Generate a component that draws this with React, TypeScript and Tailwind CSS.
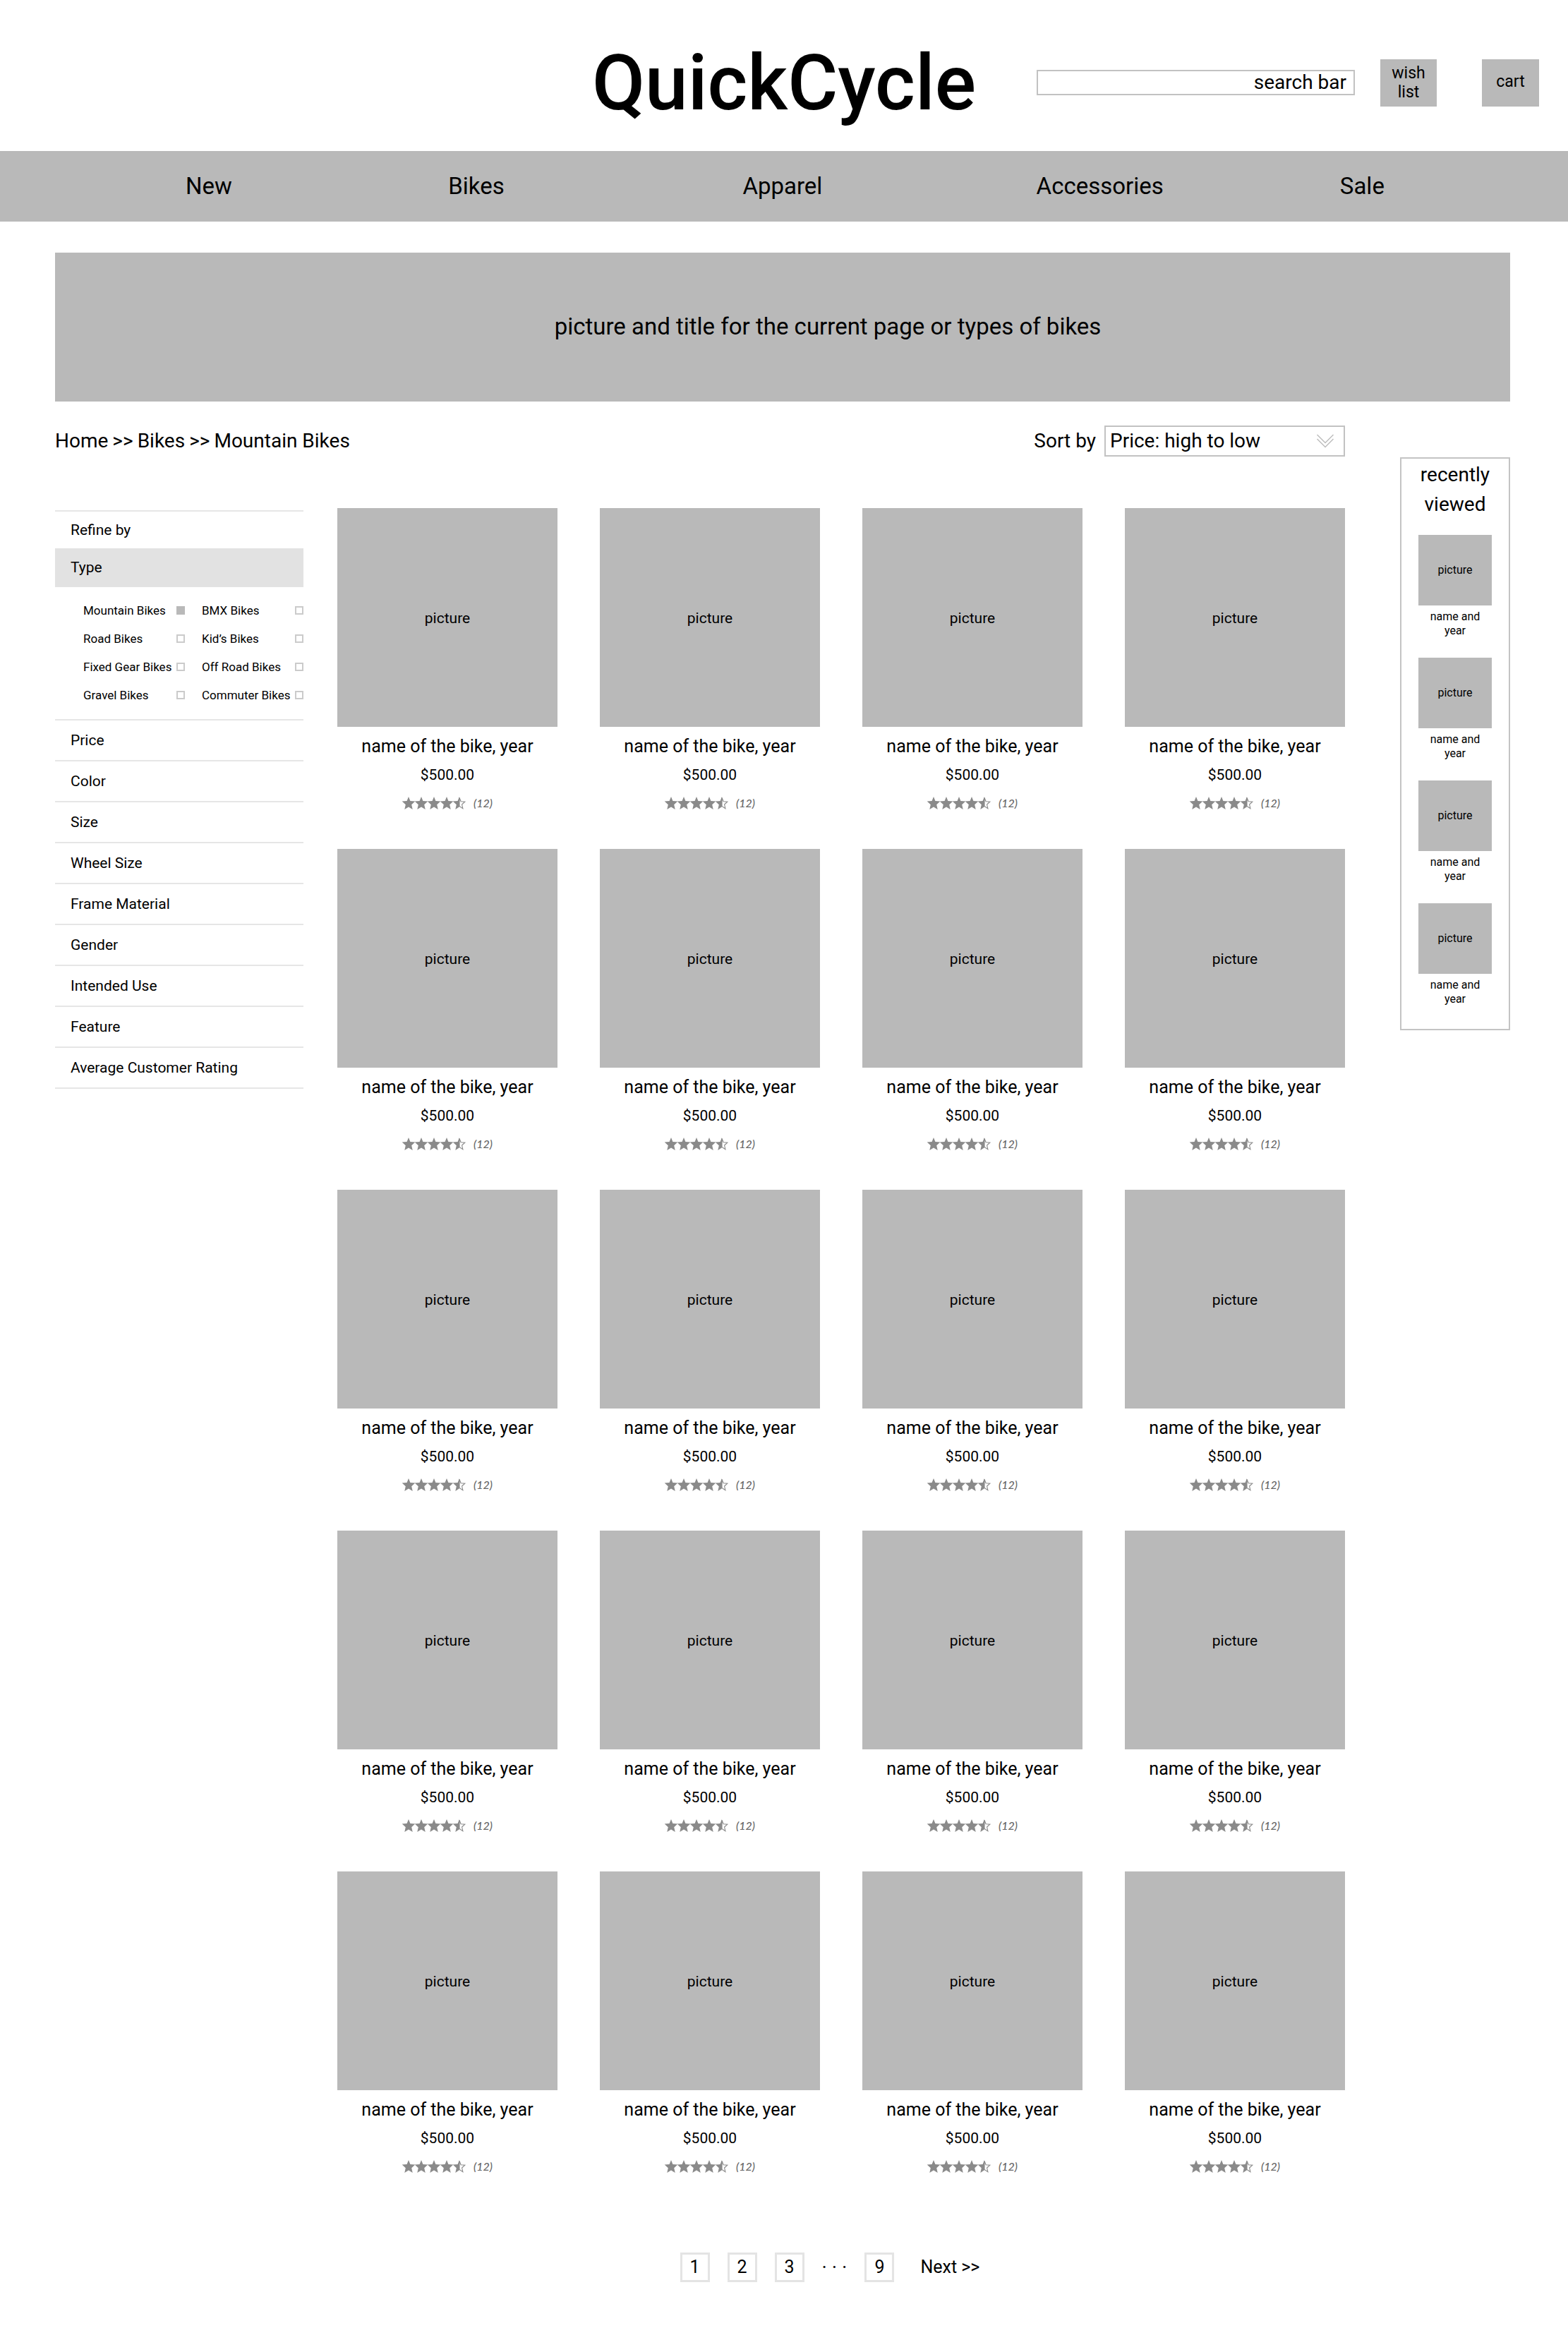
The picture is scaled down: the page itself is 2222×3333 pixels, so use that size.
import React from "react";

const navItems = ["New", "Bikes", "Apparel", "Accessories", "Sale"];

const bikeTypes = [
  { label: "Mountain Bikes", checked: true },
  { label: "BMX Bikes", checked: false },
  { label: "Road Bikes", checked: false },
  { label: "Kid’s Bikes", checked: false },
  { label: "Fixed Gear Bikes", checked: false },
  { label: "Off Road Bikes", checked: false },
  { label: "Gravel Bikes", checked: false },
  { label: "Commuter Bikes", checked: false },
];

const filters = [
  "Price",
  "Color",
  "Size",
  "Wheel Size",
  "Frame Material",
  "Gender",
  "Intended Use",
  "Feature",
  "Average Customer Rating",
];

const products = Array.from({ length: 20 }, (_, i) => ({
  id: i,
  name: "name of the bike, year",
  price: "$500.00",
  reviews: 12,
}));

const recentlyViewed = [0, 1, 2, 3];

function Star({ half = false }: { half?: boolean }) {
  return (
    <svg viewBox="0 0 18 18" className="h-[18px] w-[18px] overflow-visible" aria-hidden="true">
      {half ? (
        <>
          <path d="M9 0 L9 14.2 L3.3 18 L4.8 11.3 L-0.3 6.6 L6.6 6.1 Z" fill="#8a8a8a" />
          <path
            d="M9 1.2 L11.1 6.7 L16.8 7.1 L12.6 11 L13.9 16.8 L9 13.5 Z"
            fill="none"
            stroke="#8a8a8a"
            strokeWidth="1.1"
          />
        </>
      ) : (
        <path
          d="M9 0 L11.4 6.1 L18.3 6.6 L13.2 11.3 L14.7 18 L9 14.6 L3.3 18 L4.8 11.3 L-0.3 6.6 L6.6 6.1 Z"
          fill="#8a8a8a"
        />
      )}
    </svg>
  );
}

function Header() {
  return (
    <header className="grid grid-cols-[1fr_auto_1fr] items-center pt-[52px] pb-8">
      <h1 className="col-start-2 pt-0.5 text-[109px] leading-[128px] font-medium">QuickCycle</h1>
      <div className="flex items-center pr-[41px] pl-[86px]">
        <input
          type="text"
          aria-label="search bar"
          placeholder="search bar"
          className="h-9 min-w-0 flex-1 border-2 border-[#c2c2c2] bg-white px-2.5 pb-0.5 text-right text-[28px] leading-8 text-black outline-none placeholder:text-black placeholder:opacity-100"
        />
        <button className="ml-9 h-[67px] w-[80px] bg-[#b9b9b9] px-2 text-[23px] leading-[27px]">
          wish list
        </button>
        <button className="ml-16 h-[67px] w-[81px] bg-[#b9b9b9] pb-1 text-[23px] leading-[27px]">
          cart
        </button>
      </div>
    </header>
  );
}

function Nav() {
  return (
    <nav className="grid grid-cols-[372fr_417fr_416fr_430fr_323fr] bg-[#b9b9b9] pl-[263px]">
      {navItems.map((item) => (
        <a key={item} href="#" className="text-[33px] leading-[100px]">
          {item}
        </a>
      ))}
    </nav>
  );
}

function Toolbar() {
  return (
    <div className="flex items-center justify-between text-[28px]">
      <nav aria-label="Breadcrumb" className="flex gap-1.5">
        <a href="#">Home</a>
        <span>&gt;&gt;</span>
        <a href="#">Bikes</a>
        <span>&gt;&gt;</span>
        <a href="#">Mountain Bikes</a>
      </nav>
      <div className="flex items-center gap-3">
        <label htmlFor="sort">Sort by</label>
        <div className="relative">
          <select
            id="sort"
            className="h-11 w-[341px] appearance-none border-2 border-[#c2c2c2] bg-white pl-[6px] leading-10"
          >
            <option>Price: high to low</option>
            <option>Price: low to high</option>
          </select>
          <svg
            viewBox="0 0 24 20"
            className="pointer-events-none absolute top-3 right-4 h-5 w-6"
            fill="none"
            stroke="#bdbdbd"
            strokeWidth="1.5"
            aria-hidden="true"
          >
            <path d="M0.5 1 L12 12.5 L23.5 1" />
            <path d="M0.5 7 L12 18.5 L23.5 7" />
          </svg>
        </div>
      </div>
    </div>
  );
}

function Sidebar() {
  return (
    <aside className="w-[352px] shrink-0 pt-[3px] text-[21px]">
      <h2 className="border-t-2 border-[#e6e6e6] pl-[22px] leading-[52px]">Refine by</h2>
      <button className="block w-full bg-[#e2e2e2] pl-[22px] text-left leading-[55px]">Type</button>
      <div className="grid grid-cols-2 gap-x-6 pt-[13px] pb-[14px] pl-10">
        {bikeTypes.map((t) => (
          <label
            key={t.label}
            className="flex items-center justify-between text-[17px] leading-10 whitespace-nowrap"
          >
            {t.label}
            <input
              type="checkbox"
              defaultChecked={t.checked}
              className="size-3 shrink-0 appearance-none border-2 border-[#cbcbcb] checked:border-[#b9b9b9] checked:bg-[#b9b9b9]"
            />
          </label>
        ))}
      </div>
      <div className="border-b-2 border-[#e6e6e6]">
        {filters.map((f) => (
          <button
            key={f}
            className="block w-full border-t-2 border-[#e6e6e6] pl-[22px] text-left leading-[56px]"
          >
            {f}
          </button>
        ))}
      </div>
    </aside>
  );
}

function ProductCard({ name, price, reviews }: { name: string; price: string; reviews: number }) {
  return (
    <article className="text-center">
      <div className="flex h-[310px] items-center justify-center bg-[#b9b9b9] pt-1 text-[21px]">
        picture
      </div>
      <h3 className="mt-3 text-[25px] leading-8">{name}</h3>
      <p className="mt-2 text-[21px] leading-8">{price}</p>
      <div className="mt-3 flex h-6 items-center justify-center">
        <Star />
        <Star />
        <Star />
        <Star />
        <Star half />
        <span className="ml-[11px] font-[Lato,sans-serif] text-[16px] leading-6 font-medium text-[#666666] italic">
          ({reviews})
        </span>
      </div>
    </article>
  );
}

function PageLink({ n }: { n: number }) {
  return (
    <a
      href="#"
      className="flex h-[42px] w-[42px] items-center justify-center border-[3px] border-[#e4e4e4]"
    >
      {n}
    </a>
  );
}

function Pagination() {
  return (
    <nav
      aria-label="Pagination"
      className="mt-[110px] flex items-center justify-center gap-[25px] pr-8 text-[25px]"
    >
      <PageLink n={1} />
      <PageLink n={2} />
      <PageLink n={3} />
      <span className="text-[28px] leading-8">· · ·</span>
      <PageLink n={9} />
      <a href="#" className="ml-3">
        Next &gt;&gt;
      </a>
    </nav>
  );
}

function RecentlyViewed() {
  return (
    <aside className="mt-[45px] w-[156px] shrink-0 self-start border-2 border-[#c4c4c4] px-6 pt-0.5 pb-8 text-center">
      <h2 className="text-[28px] leading-[42px]">recently viewed</h2>
      <ul className="mt-[22px] flex flex-col gap-7">
        {recentlyViewed.map((id) => (
          <li key={id} className="text-[16px] leading-5">
            <div className="flex h-[100px] items-center justify-center bg-[#b9b9b9]">picture</div>
            <p className="mt-1.5 px-4">name and year</p>
          </li>
        ))}
      </ul>
    </aside>
  );
}

export default function App() {
  return (
    <div className="min-h-screen bg-white pb-[100px] font-[Roboto,sans-serif] text-black">
      <Header />
      <Nav />
      <div className="pr-[82px] pl-[78px]">
        <section className="mt-11 flex h-[211px] items-center justify-center bg-[#b9b9b9] pb-0.5 pl-32 text-[33px]">
          picture and title for the current page or types of bikes
        </section>
        <div className="mt-[34px] flex gap-[78px]">
          <main className="min-w-0 flex-1">
            <Toolbar />
            <div className="mt-[73px] flex gap-12">
              <Sidebar />
              <div className="min-w-0 flex-1">
                <div className="grid grid-cols-4 gap-x-[60px] gap-y-[53px]">
                  {products.map((p) => (
                    <ProductCard key={p.id} name={p.name} price={p.price} reviews={p.reviews} />
                  ))}
                </div>
                <Pagination />
              </div>
            </div>
          </main>
          <RecentlyViewed />
        </div>
      </div>
    </div>
  );
}
